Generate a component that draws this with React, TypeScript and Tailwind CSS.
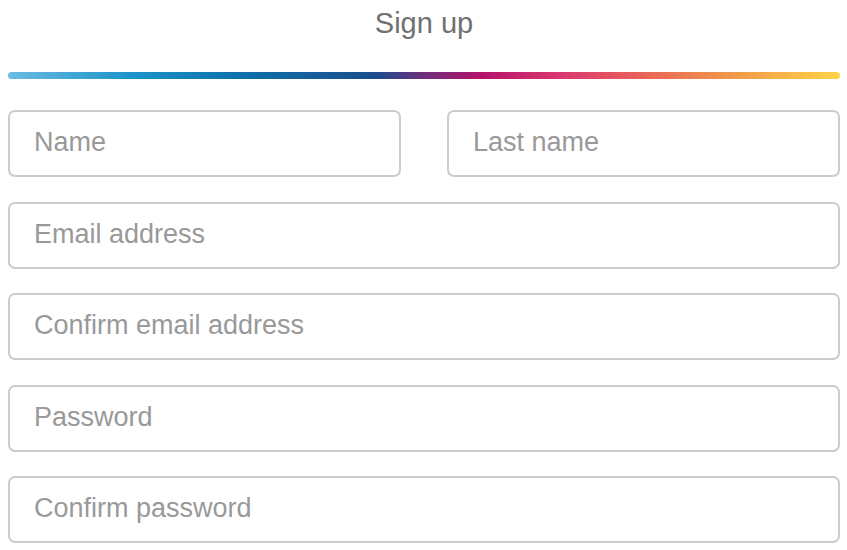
import React from "react";

const font = { fontFamily: '"Liberation Sans", Arial, sans-serif' };

function Field({ placeholder }: { placeholder: string }) {
  return (
    <input
      type="text"
      placeholder={placeholder}
      className="block w-full h-[67px] rounded-[7px] border-2 border-[#cccccc] bg-white pl-[24px] pr-4 pb-[2px] text-[27px] text-[#555] placeholder:text-[#999999] outline-none"
      style={font}
    />
  );
}

export default function App() {
  return (
    <div className="w-[847px] h-[550px] bg-white overflow-hidden pl-[8px] pr-[7px]" style={font}>
      <div className="pt-[3px] text-center text-[29px] leading-[40px] text-[#707070]">Sign up</div>
      <div
        className="mt-[29px] h-[7px] rounded-full"
        style={{
          background:
            "linear-gradient(to right, #6bbbe2 0%, #1c93c9 15%, #0f71aa 28%, #1a4d8f 44%, #7a2a7a 51%, #b5136a 57%, #da366f 66%, #e8625a 76%, #f0944a 86%, #fdd347 100%)",
        }}
      />
      <div className="mt-[31px] flex flex-col gap-[24.5px]">
        <div className="flex justify-between">
          <div className="w-[393px]">
            <Field placeholder="Name" />
          </div>
          <div className="w-[393px]">
            <Field placeholder="Last name" />
          </div>
        </div>
        <Field placeholder="Email address" />
        <Field placeholder="Confirm email address" />
        <Field placeholder="Password" />
        <Field placeholder="Confirm password" />
      </div>
    </div>
  );
}
